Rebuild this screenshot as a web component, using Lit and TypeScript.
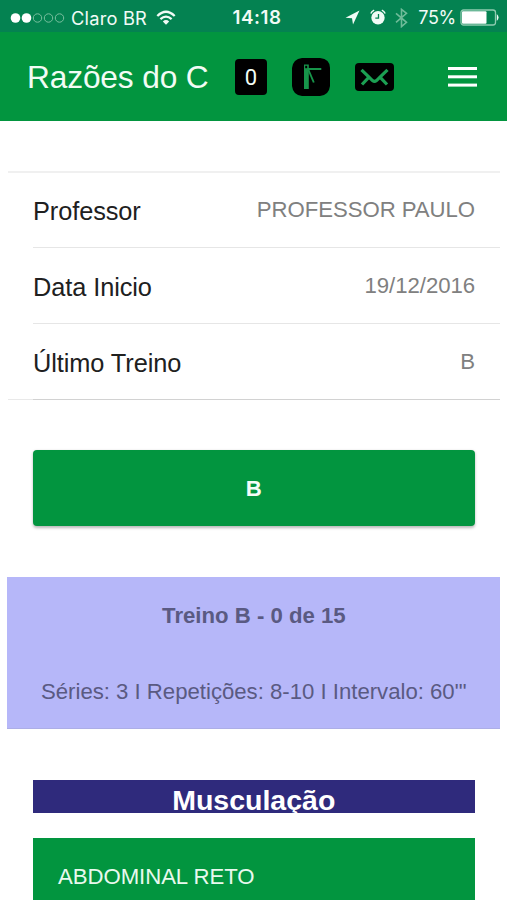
import { LitElement, html, css, svg } from "lit";
import { customElement, property } from "lit/decorators.js";

@customElement("status-bar")
class StatusBar extends LitElement {
  static styles = css`
    :host {
      display: grid;
      grid-template-columns: 1fr auto 1fr;
      align-items: center;
      height: 32px;
      padding: 2px 9px 0 10px;
      box-sizing: border-box;
      background: #048251;
      color: #f1fbf6;
      font: 400 18px/30px Inter, sans-serif;
    }
    .side { display: flex; align-items: center; }
    .right { justify-content: flex-end; }
    .carrier { margin-left: 6px; font-size: 18.3px; letter-spacing: 0.2px; }
    .wifi { margin-left: 9px; }
    .time { margin-left: 6px; padding-top: 1px; font-weight: 600; font-size: 18.8px; letter-spacing: 0.55px; }
    .alarm { margin-left: 10px; }
    .bt { margin-left: 9px; }
    .pct { margin-left: 10px; font-size: 18px; letter-spacing: -0.3px; }
    .battery { margin-left: 4px; margin-right: -2px; }
    svg { display: block; flex: none; }
  `;

  render() {
    return html`
      <div class="side">
        <svg width="55" height="12" viewBox="0 0 55 12">
          ${[0, 1].map((i) => svg`<circle cx=${5.5 + i * 11} cy="6" r="4.8" fill="#fff" />`)}
          ${[2, 3, 4].map(
            (i) => svg`<circle cx=${5.5 + i * 11} cy="6" r="4.2" fill="none" stroke="#79bf9f" stroke-width="1" />`
          )}
        </svg>
        <span class="carrier">Claro BR</span>
        <svg class="wifi" width="20" height="16" viewBox="0 0 20 16" fill="none" stroke="#f1fbf6" stroke-width="2.3">
          <path d="M1.3 6 Q10 -2.4 18.7 6" />
          <path d="M4.4 9.2 Q10 4 15.6 9.2" />
          <path d="M6.8 11.4 Q10 8.6 13.2 11.4 L10 14.8Z" fill="#f1fbf6" stroke="none" />
        </svg>
      </div>
      <span class="time">14:18</span>
      <div class="side right">
        <svg width="15" height="15" viewBox="0 0 15 15"><path d="M14.5 .5 L.5 7.7 L7 8.2 L8 14.5Z" fill="#f1fbf6" /></svg>
        <svg class="alarm" width="16" height="17" viewBox="0 0 16 17" fill="none">
          <circle cx="8" cy="8.7" r="6.7" fill="#f1fbf6" />
          <path d="M.8 4.6 Q1.8 2.2 4.2 1.2 M11.8 1.2 Q14.2 2.2 15.2 4.6" stroke="#f1fbf6" stroke-width="1.4" />
          <path d="M8.5 5 V9.2 H5.3" stroke="#048251" stroke-width="1.3" />
        </svg>
        <svg class="bt" width="13" height="20" viewBox="0 0 13 20" fill="none" stroke="#6fbb99" stroke-width="1.6">
          <path d="M1 5.3 L11.5 14.3 L6.5 18.6 V1.4 L11.5 5.3 L1 14.3" />
        </svg>
        <span class="pct">75%</span>
        <svg class="battery" width="40" height="17" viewBox="0 0 40 17">
          <rect x="1" y="1" width="34.5" height="15" rx="2.5" fill="none" stroke="#8fcbb0" stroke-width="1.3" />
          <rect x="2" y="2.2" width="24.5" height="12.6" rx="1" fill="#fff" />
          <path d="M36.8 5 Q40.4 8.5 36.8 12Z" fill="#f1fbf6" />
        </svg>
      </div>
    `;
  }
}

@customElement("nav-bar")
class NavBar extends LitElement {
  static styles = css`
    :host {
      display: flex;
      align-items: center;
      height: 89px;
      padding: 0 30px 0 27px;
      box-sizing: border-box;
      background: #02953f;
      color: #f2fcf5;
      font-family: "Liberation Sans", Arial, sans-serif;
    }
    .title { width: 208px; font-size: 31.7px; line-height: 40px; letter-spacing: -0.15px; white-space: nowrap; }
    .count {
      width: 32px;
      height: 36px;
      border-radius: 4px;
      background: #000;
      font: 22px/37px Roboto, sans-serif;
      text-align: center;
    }
    svg { display: block; flex: none; }
    .gym { margin-left: 25px; }
    .mail { margin-left: 25px; }
    .menu { margin-left: auto; }
  `;

  render() {
    return html`
      <span class="title">Razões do C</span>
      <span class="count">0</span>
      <svg class="gym" width="38" height="38" viewBox="0 0 38 38">
        <path d="M10 0 H28 Q38 1 38 10 V28 Q37 37 28 38 H10 Q1 37 0 28 V10 Q1 1 10 0Z" fill="#000" />
        <path d="M12 6.5 H16.8 V31 H12Z" fill="#17954a" />
        <path d="M13.2 7.8 H15.2 V10.2 H13.2Z" fill="#000" />
        <path d="M16 11 H29.3" stroke="#17954a" stroke-width="2" />
        <path d="M16.3 11.5 L21.8 24.5" stroke="#17954a" stroke-width="1.9" />
      </svg>
      <svg class="mail" width="39" height="28" viewBox="0 0 39 28" fill="none">
        <rect width="39" height="28" rx="4" fill="#000" />
        <path d="M6.5 6.8 L14 14.2 L17.5 17.6 Q19.5 19.2 21.5 17.6 L25 14.2 L32.5 6.8 M7 21.5 L14 14.2 M25 14.2 L32 21.5" stroke="#1b9f52" stroke-width="3.2" />
      </svg>
      <svg class="menu" width="29" height="20" viewBox="0 0 29 20" fill="#fff">
        <rect width="29" height="3" /><rect y="8.3" width="29" height="3" /><rect y="16.6" width="29" height="3" />
      </svg>
    `;
  }
}

@customElement("info-row")
class InfoRow extends LitElement {
  @property() label = "";
  @property() value = "";

  static styles = css`
    :host {
      display: flex;
      justify-content: space-between;
      height: 76px;
      margin-left: 25px;
      padding-right: 25px;
      box-sizing: border-box;
      border-bottom: 1px solid #e6e6e6;
      line-height: 78px;
    }
    :host([first]) { height: 75px; line-height: 76px; }
    :host([first]) .value { line-height: 74px; }
    :host([last]) { border-color: #d2d2d2; }
    .label { font-size: 25.35px; letter-spacing: -0.08px; color: #202020; }
    .value { font-size: 22.18px; letter-spacing: -0.05px; color: #808080; line-height: 76px; }
  `;

  render() {
    return html`<span class="label">${this.label}</span><span class="value">${this.value}</span>`;
  }
}

@customElement("app-root")
class AppRoot extends LitElement {
  static styles = css`
    :host {
      display: block;
      height: 900px;
      overflow: hidden;
      background: #fff;
      font-family: "Liberation Sans", Arial, sans-serif;
    }
    .info {
      height: 229px;
      margin: 50px 7px 0 8px;
      box-sizing: border-box;
      border-top: 2px solid #f0f0f0;
      background: linear-gradient(#e9e9e9, #e9e9e9) left bottom / 25px 1px no-repeat;
    }
    .train {
      display: block;
      width: 442.5px;
      height: 76px;
      margin: 50px 0 0 32.5px;
      padding: 2px 0 0;
      border: 0;
      border-radius: 4px;
      background: #02953f;
      box-shadow: 0 1.5px 3px rgba(0, 0, 0, 0.28);
      color: #f5fdf7;
      font: 700 22.18px "Liberation Sans", Arial, sans-serif;
    }
    .summary {
      height: 152px;
      margin: 51px 6.6px 0 7.4px;
      padding-top: 1px;
      box-sizing: border-box;
      border-bottom: 1.6px solid #adaee6;
      background: #b6b7f9;
      color: #5a5a82;
      font-size: 22.18px;
      line-height: 76px;
      text-align: center;
      white-space: nowrap;
    }
    .progress { font-weight: 700; }
    .sets { letter-spacing: -0.01px; }
    .group {
      height: 33px;
      margin: 51px 32px 0 32.5px;
      background: #2f2a7c;
      color: #fff;
      font-size: 28.5px;
      font-weight: 700;
      line-height: 40px;
      text-align: center;
    }
    .exercise {
      height: 76px;
      margin: 25px 32px 0 32.5px;
      padding-left: 25.5px;
      background: #02953f;
      color: #e8f9ee;
      font-size: 22.18px;
      letter-spacing: -0.05px;
      line-height: 78px;
    }
  `;

  render() {
    return html`
      <status-bar></status-bar>
      <nav-bar></nav-bar>
      <div class="info">
        <info-row first label="Professor" value="PROFESSOR PAULO"></info-row>
        <info-row label="Data Inicio" value="19/12/2016"></info-row>
        <info-row last label="Último Treino" value="B"></info-row>
      </div>
      <button class="train">B</button>
      <div class="summary">
        <div class="progress">Treino B - 0 de 15</div>
        <div class="sets">Séries: 3 I Repetições: 8-10 I Intervalo: 60"'</div>
      </div>
      <div class="group">Musculação</div>
      <div class="exercise">ABDOMINAL RETO</div>
    `;
  }
}
